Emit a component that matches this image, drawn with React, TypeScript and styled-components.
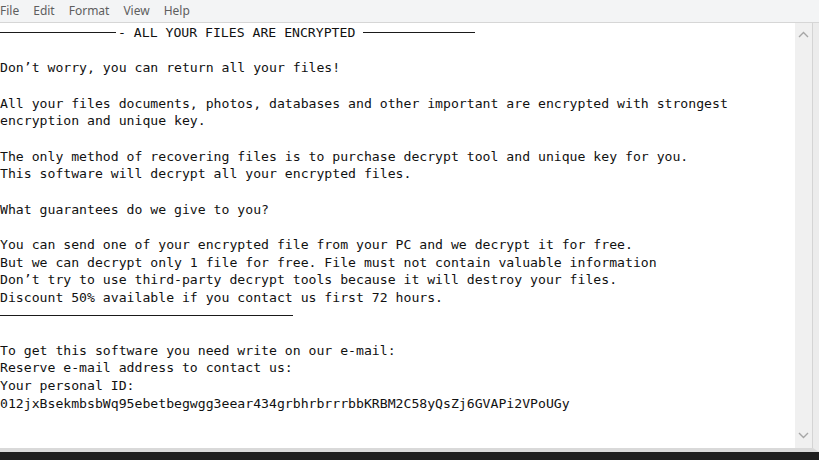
import * as React from 'react';
import styled, { createGlobalStyle } from 'styled-components';

const GlobalStyle = createGlobalStyle`
  html, body {
    margin: 0;
    padding: 0;
    background: #1d1d1d;
    overflow: hidden;
  }
`;

const lines: (string | null)[] = [
  '',
  "Don’t worry, you can return all your files!",
  '',
  'All your files documents, photos, databases and other important are encrypted with strongest',
  'encryption and unique key.',
  '',
  'The only method of recovering files is to purchase decrypt tool and unique key for you.',
  'This software will decrypt all your encrypted files.',
  '',
  'What guarantees do we give to you?',
  '',
  'You can send one of your encrypted file from your PC and we decrypt it for free.',
  'But we can decrypt only 1 file for free. File must not contain valuable information',
  "Don’t try to use third-party decrypt tools because it will destroy your files.",
  'Discount 50% available if you contact us first 72 hours.',
  null,
  '',
  'To get this software you need write on our e-mail:',
  'Reserve e-mail address to contact us:',
  'Your personal ID:',
  '012jxBsekmbsbWq95ebetbegwgg3eear434grbhrbrrrbbKRBM2C58yQsZj6GVAPi2VPoUGy',
];

const App = () => {
  return (
    <>
      <GlobalStyle />
      <Window>
        <MenuBar>
          {['File', 'Edit', 'Format', 'View', 'Help'].map((m) => (
            <MenuItem key={m}>{m}</MenuItem>
          ))}
        </MenuBar>
        <EditorFrame>
          <TextArea>
            <Line>
              <Rule width={116} />
              <span>- ALL YOUR FILES ARE ENCRYPTED </span>
              <Rule width={112} />
            </Line>
            {lines.map((l, i) =>
              l === null ? (
                <Line key={i}>
                  <Rule width={293} />
                </Line>
              ) : (
                <Line key={i}>{l || '\u00a0'}</Line>
              )
            )}
          </TextArea>
          <ScrollBar>
            <Arrow>
              <svg width="11" height="7" viewBox="0 0 11 7">
                <path d="M1 6 L5.5 1.5 L10 6" fill="none" stroke="#a6a6a6" strokeWidth="1.4" />
              </svg>
            </Arrow>
            <Arrow>
              <svg width="11" height="7" viewBox="0 0 11 7">
                <path d="M1 1 L5.5 5.5 L10 1" fill="none" stroke="#a6a6a6" strokeWidth="1.4" />
              </svg>
            </Arrow>
          </ScrollBar>
        </EditorFrame>
        <BottomStrip />
      </Window>
    </>
  );
};

export default App;

const Window = styled.div`
  width: 819px;
  height: 460px;
  display: flex;
  flex-direction: column;
  background: #1d1d1d;
`;

const MenuBar = styled.div`
  height: 22px;
  display: flex;
  align-items: center;
  gap: 14px;
  background: #f3f4f5;
  border-bottom: 1px solid #d6d6d6;
  font-family: 'Noto Sans', 'Open Sans', sans-serif;
  font-size: 12px;
  color: #5e5e5e;
`;

const MenuItem = styled.span`
  line-height: 22px;
`;

const EditorFrame = styled.div`
  height: 425px;
  display: flex;
  background: #ffffff;
  border-right: 6px solid #ececec;
  border-bottom: 4px solid #d9d9d9;
`;

const TextArea = styled.div`
  flex: 1;
  padding-top: 1px;
  font-family: 'DejaVu Sans Mono', 'Liberation Mono', monospace;
  font-size: 13.15px;
  line-height: 17.67px;
  color: #111111;
  white-space: pre;
  overflow: hidden;
`;

const Line = styled.div`
  height: 17.67px;
  display: flex;
  align-items: center;
`;

const Rule = styled.span<{ width: number }>`
  display: inline-block;
  width: ${(p) => p.width}px;
  height: 1px;
  background: #1a1a1a;
  margin-right: 2px;
`;

const ScrollBar = styled.div`
  width: 17px;
  background: #f0f0f0;
  border-right: 1px solid #d4d4d4;
  display: flex;
  flex-direction: column;
  justify-content: space-between;
  align-items: center;
  padding: 6px 0 8px;
`;

const Arrow = styled.div`
  height: 10px;
  display: flex;
  align-items: center;
  justify-content: center;
`;

const BottomStrip = styled.div`
  flex: 1;
  background: #1d1d1d;
`;
